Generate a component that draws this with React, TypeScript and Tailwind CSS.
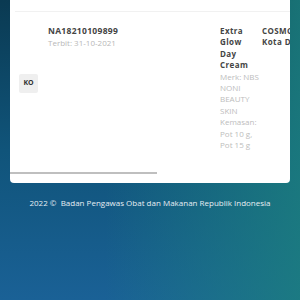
import React from 'react'

const font = { fontFamily: '"Open Sans", "Liberation Sans", sans-serif' }

const nameLines = ['Extra', 'Glow', 'Day', 'Cream']
const infoLines = ['Merk: NBS', 'NONI', 'BEAUTY', 'SKIN', 'Kemasan:', 'Pot 10 g,', 'Pot 15 g']

export default function App() {
  return (
    <div
      style={font}
      className="h-[300px] w-[300px] overflow-hidden bg-[linear-gradient(to_right,rgba(28,128,126,0)_35%,rgba(28,128,126,0.8)_100%),linear-gradient(to_bottom,#0a3a52_0%,#10547a_50%,#1a6196_100%)]"
    >
      {/* table card */}
      <div className="ml-[10px] w-[280px] overflow-hidden rounded-b-[4px] bg-white">
        <div className="h-[11px]" />
        <div className="ml-[5px] w-[420px] border-t border-[#f1f1f1]">
          <div className="flex h-[160px] items-start">
            <div className="w-[33px] shrink-0 pt-[62px] pl-[4px]">
              <span className="flex h-[19px] w-[19px] items-center justify-center rounded-[2px] bg-[#efefef] text-[7px] font-bold text-[#333]">
                KO
              </span>
            </div>
            <div className="w-[172px] shrink-0 pt-[13px]">
              <p className="text-[8.5px] leading-[12px] font-bold tracking-[0.3px] text-[#444]">NA18210109899</p>
              <p className="text-[8px] leading-[11px] text-[#b8b8b8]">Terbit: 31-10-2021</p>
            </div>
            <div className="w-[42px] shrink-0 pt-[13px] text-[8px] leading-[11.4px] whitespace-nowrap">
              {nameLines.map(l => (
                <p key={l} className="font-bold tracking-[0.4px] text-[#444]">{l}</p>
              ))}
              {infoLines.map(l => (
                <p key={l} className="text-[#bdbdbd]">{l}</p>
              ))}
            </div>
            <div className="w-[90px] shrink-0 pt-[13px] text-[8px] leading-[11.4px] font-bold tracking-[0.4px] text-[#444]">
              <p>COSMOS</p>
              <p>Kota Depok</p>
            </div>
          </div>
        </div>
        {/* horizontal scrollbar */}
        <div className="h-[2px] w-[147px] bg-[#bfbfbf]" />
        <div className="h-[9px]" />
      </div>

      <p className="mt-[14px] text-center text-[8px] leading-[11px] text-[#e6eef3]">
        2022 ©&nbsp; Badan Pengawas Obat dan Makanan Republik Indonesia
      </p>
    </div>
  )
}
